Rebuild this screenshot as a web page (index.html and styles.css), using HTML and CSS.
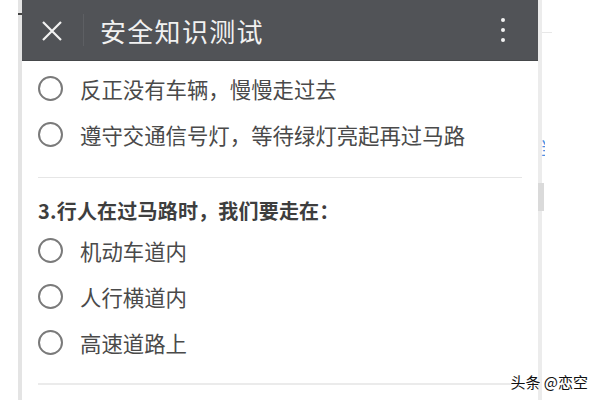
FILE: index.html
```html
<!DOCTYPE html>
<html>
<head>
    <meta charset="UTF-8">
    <title>安全知识测试</title>
    <link rel="stylesheet" href="styles.css">
</head>
<body>
<div class="screen">
    <div class="gutter-left"><span class="tick"></span></div>

    <div class="phone">
        <div class="header">
            <svg class="close" width="20" height="20" viewBox="0 0 20 20">
                <path d="M1 1 L19 19 M19 1 L1 19" stroke="#f2f2f2" stroke-width="2.2" fill="none"/>
            </svg>
            <span class="sep"></span>
            <h1>安全知识测试</h1>
            <div class="more">
                <span></span><span></span><span></span>
            </div>
        </div>

        <div class="quiz">
            <div class="section first">
                <label class="option"><span class="radio"></span>反正没有车辆，慢慢走过去</label>
                <label class="option"><span class="radio"></span>遵守交通信号灯，等待绿灯亮起再过马路</label>
            </div>

            <div class="section">
                <div class="question">3.行人在过马路时，我们要走在：</div>
                <label class="option"><span class="radio"></span>机动车道内</label>
                <label class="option"><span class="radio"></span>人行横道内</label>
                <label class="option"><span class="radio"></span>高速道路上</label>
            </div>
        </div>
    </div>

    <div class="gutter-right">
        <span class="rule"></span>
        <span class="peek">当</span>
        <span class="thumb"></span>
    </div>

    <div class="mark">头条 @恋空</div>
</div>
</body>
</html>
```

FILE: styles.css
```css
body {
    margin: 0;
    background: #fff;
    font-family: "Noto Sans CJK SC", "Noto Sans", sans-serif;
    overflow: hidden;
}

.screen {
    display: flex;
    height: 400px;
    position: relative;
}

.gutter-left {
    width: 18px;
    border-right: 4px solid #e4e4e4;
    position: relative;
}

.gutter-left .tick {
    position: absolute;
    left: 18px;
    top: 13px;
    width: 4px;
    height: 2px;
    background: #444;
}

.phone {
    width: 516px;
    display: flex;
    flex-direction: column;
}

.header {
    height: 60px;
    background-color: #515357;
    border-bottom: 1px solid #45474a;
    display: flex;
    align-items: center;
    padding: 0 20px;
}

.close {
    margin-top: 1px;
}

.sep {
    width: 1px;
    height: 32px;
    background: #5d5f63;
    margin-left: 21px;
}

.header h1 {
    margin: 0 0 0 16px;
    font-size: 26px;
    font-weight: normal;
    color: #f1f1f1;
    letter-spacing: 1.3px;
    flex: 1;
}

.more {
    display: flex;
    flex-direction: column;
    gap: 6px;
    margin-right: 13px;
}

.more span {
    width: 4px;
    height: 4px;
    border-radius: 50%;
    background: #f2f2f2;
}

.quiz {
    padding: 0 16px;
}

.section {
    padding: 18px 0 18px;
    border-bottom: 2px solid #ebebeb;
}

.section.first {
    padding-top: 4px;
    padding-bottom: 20px;
    border-bottom: 1px solid #e6e6e6;
}

.question {
    font-size: 20px;
    font-weight: bold;
    color: #3e3e3e;
    line-height: 30px;
    margin-bottom: 1px;
    letter-spacing: 0.2px;
}

.option {
    display: flex;
    align-items: center;
    height: 46px;
    font-size: 21.4px;
    color: #4a4a4a;
}

.radio {
    width: 21px;
    height: 21px;
    border: 2px solid #7a7a7a;
    border-radius: 50%;
    margin-right: 17px;
}

.gutter-right {
    width: 4px;
    background: #ececec;
    position: relative;
}

.gutter-right .rule {
    position: absolute;
    left: 4px;
    top: 32px;
    width: 10px;
    height: 1px;
    background: #e8e8e8;
}

.gutter-right .peek {
    position: absolute;
    left: 2px;
    top: 136px;
    width: 5px;
    overflow: hidden;
    font-size: 18px;
    color: #4a90e2;
    line-height: 22px;
}

.gutter-right .thumb {
    position: absolute;
    left: 0;
    top: 183px;
    width: 6px;
    height: 28px;
    background: #dadada;
}

.mark {
    position: absolute;
    right: 12px;
    bottom: 8px;
    font-size: 15px;
    color: #111;
    text-shadow: 1px 0 #fff, -1px 0 #fff, 0 1px #fff, 0 -1px #fff;
}
```
